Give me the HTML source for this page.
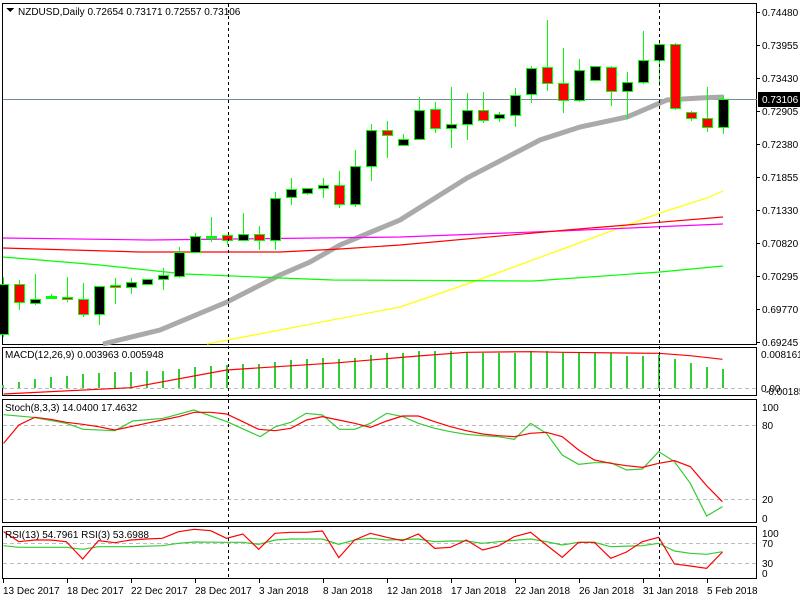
<!DOCTYPE html>
<html><head><meta charset="utf-8"><style>
html,body{margin:0;padding:0;background:#fff;width:800px;height:600px;overflow:hidden}
svg{display:block}
text{font-family:"Liberation Sans",sans-serif;font-size:10px;fill:#000}
</style></head><body>
<svg id="s" width="800" height="600" viewBox="0 0 800 600" shape-rendering="crispEdges">
<rect x="0" y="0" width="800" height="600" fill="#fff"/>
<!-- pane frames -->
<rect x="2.5" y="3.5" width="754" height="341" fill="none" stroke="#000"/>
<rect x="2.5" y="347.5" width="754" height="48" fill="none" stroke="#000"/>
<rect x="2.5" y="399.5" width="754" height="123" fill="none" stroke="#000"/>
<rect x="2.5" y="526.5" width="754" height="52" fill="none" stroke="#000"/>
<!-- dashed level lines -->
<g stroke="#bbb" stroke-dasharray="4,3">
<line x1="3" y1="388.5" x2="756" y2="388.5"/>
<line x1="3" y1="425.5" x2="756" y2="425.5"/>
<line x1="3" y1="499.5" x2="756" y2="499.5"/>
<line x1="3" y1="543.5" x2="756" y2="543.5"/>
<line x1="3" y1="563.5" x2="756" y2="563.5"/>
</g>
<!-- current price line -->
<line x1="3" y1="99.5" x2="757" y2="99.5" stroke="#778899"/>
<g shape-rendering="auto" fill="none">
<polyline stroke="#aaa" stroke-width="5" points="103,344 160,330 227,302 280,275 310,262 340,245 400,220 467,178 540,140 580,127 627,117 667,100 700,98 723,97"/>
<polyline stroke="#ff0" stroke-width="1.2" points="207,344 400,307 470,283 560,250 660,213 707,198 723,191"/>
<polyline stroke="#00ff00" stroke-width="1.2" points="3,257 100,265 185,274 280,278 333,280 533,281 660,272 723,266"/>
<polyline stroke="#f0f" stroke-width="1.2" points="3,238 150,240 400,237 560,231 723,224"/>
<polyline stroke="#f00" stroke-width="1.2" points="3,248 140,252 280,252 340,249 400,245 567,230 723,217"/>
</g>
<g id="candles"></g>
<g id="macd"></g>
<g shape-rendering="auto" fill="none" transform="translate(0,340) scale(0.5102,0.33333)">
<polyline vector-effect="non-scaling-stroke" stroke="#f00" stroke-width="1.2" points="7,162 256,143 444,90 664,68 820,48 914,37 1040,35 1102,37 1291,40 1353,47 1416,58"/>
<polyline vector-effect="non-scaling-stroke" stroke="#3c3" stroke-width="1.2" points="7,224 65,232 130,250 163,268 225,272 260,243 320,235 380,210 445,245 510,290 540,260 570,247 600,220 632,225 665,268 695,268 726,250 758,220 790,230 820,250 852,265 883,275 914,283 946,287 977,290 1008,298 1040,250 1071,280 1102,345 1134,373 1165,368 1197,368 1228,390 1259,387 1291,335 1322,365 1353,430 1385,528 1416,500"/>
<polyline vector-effect="non-scaling-stroke" stroke="#f00" stroke-width="1.2" points="7,310 37,255 68,232 99,238 130,247 162,253 193,260 225,270 256,260 287,250 318,240 350,230 381,217 413,217 444,222 476,245 507,268 539,272 570,265 601,240 632,230 664,240 695,250 726,262 758,243 789,228 820,228 852,245 883,260 914,272 946,282 977,287 1008,290 1040,280 1071,277 1102,290 1134,330 1165,360 1197,370 1228,377 1259,382 1291,370 1322,362 1353,380 1385,437 1416,485"/>
<polyline vector-effect="non-scaling-stroke" stroke="#3c3" stroke-width="1.2" points="7,617 37,622 130,622 162,628 193,620 256,620 318,617 350,610 381,606 444,607 476,607 507,613 539,600 570,597 632,597 664,613 695,600 726,595 758,600 820,597 852,605 883,603 914,603 946,610 977,605 1040,597 1071,605 1102,615 1134,607 1165,607 1197,620 1259,617 1291,610 1322,633 1353,640 1385,643 1416,635"/>
<polyline vector-effect="non-scaling-stroke" stroke="#f00" stroke-width="1.2" points="7,575 37,605 68,600 99,600 130,605 162,657 193,602 225,608 256,600 287,597 318,595 350,575 381,568 413,572 444,595 476,582 507,628 539,580 570,577 601,577 632,573 664,653 695,600 726,580 758,592 789,602 820,582 852,625 883,622 914,600 946,630 977,618 1008,590 1040,577 1071,615 1102,652 1134,607 1165,607 1197,655 1228,636 1259,605 1291,592 1322,672 1353,678 1385,685 1416,636"/>
</g>
<!-- vertical dashed lines -->
<g stroke="#000" stroke-dasharray="3,3">
<line x1="228.5" y1="4" x2="228.5" y2="578"/>
<line x1="659.5" y1="4" x2="659.5" y2="578"/>
</g>
<!-- title -->
<polygon points="6,8 14,8 10,12" fill="#000"/>
<text x="18" y="15">NZDUSD,Daily  0.72654 0.73171 0.72557 0.73106</text>
<text x="5" y="358">MACD(12,26,9) 0.003963 0.005948</text>
<text x="5" y="411">Stoch(8,3,3) 14.0400 17.4632</text>
<text x="5" y="538">RSI(13) 54.7961  RSI(3) 53.6988</text>
<!-- price axis -->
<g stroke="#000">
<line x1="757" y1="12.5" x2="760" y2="12.5"/><line x1="757" y1="45.5" x2="760" y2="45.5"/><line x1="757" y1="78.5" x2="760" y2="78.5"/><line x1="757" y1="111.5" x2="760" y2="111.5"/><line x1="757" y1="144.5" x2="760" y2="144.5"/><line x1="757" y1="177.5" x2="760" y2="177.5"/><line x1="757" y1="210.5" x2="760" y2="210.5"/><line x1="757" y1="243.5" x2="760" y2="243.5"/><line x1="757" y1="276.5" x2="760" y2="276.5"/><line x1="757" y1="309.5" x2="760" y2="309.5"/><line x1="757" y1="342.5" x2="760" y2="342.5"/>
</g>
<g>
<text x="762" y="16">0.74480</text><text x="762" y="49">0.73955</text><text x="762" y="82">0.73430</text><text x="762" y="115">0.72905</text><text x="762" y="148">0.72380</text><text x="762" y="181">0.71855</text><text x="762" y="214">0.71330</text><text x="762" y="247">0.70820</text><text x="762" y="280">0.70295</text><text x="762" y="313">0.69770</text><text x="762" y="346">0.69245</text>
</g>
<rect x="758" y="92" width="42" height="15" fill="#000"/>
<text x="762" y="103" style="fill:#fff">0.73106</text>
<text x="761" y="358">0.008161</text>
<text x="761" y="392">0.00</text>
<text x="765" y="395">-0.001859</text>
<text x="762" y="411">100</text><text x="762" y="429">80</text><text x="762" y="503">20</text><text x="762" y="522">0</text>
<text x="762" y="537">100</text><text x="762" y="547">70</text><text x="762" y="567">30</text><text x="762" y="577">0</text>
<!-- date axis -->
<g id="dates"></g>
<text x="3" y="594">13 Dec 2017</text><text x="67" y="594">18 Dec 2017</text><text x="131" y="594">22 Dec 2017</text><text x="195" y="594">28 Dec 2017</text><text x="259" y="594">3 Jan 2018</text><text x="323" y="594">8 Jan 2018</text><text x="387" y="594">12 Jan 2018</text><text x="451" y="594">17 Jan 2018</text><text x="515" y="594">22 Jan 2018</text><text x="579" y="594">26 Jan 2018</text><text x="643" y="594">31 Jan 2018</text><text x="707" y="594">5 Feb 2018</text>
</svg>
<script>
var NS="http://www.w3.org/2000/svg";
function el(p,t,a){var e=document.createElementNS(NS,t);for(var k in a)e.setAttribute(k,a[k]);p.appendChild(e);return e;}
var C=[[277,337,284,334,'k'],[280,310,284,302,'r'],[274,305,299,303,'k'],[294,299,296,298,'g'],[277,302,297,299,'r'],[283,317,299,314,'r'],[286,325,286,314,'k'],[278,304,285,287,'r'],[278,294,282,287,'k'],[279,284,279,284,'k'],[268,290,275,279,'k'],[247,278,252,276,'k'],[233,252,236,252,'k'],[217,242,236,238,'g'],[235,245,235,240,'r'],[213,240,234,240,'k'],[226,250,234,240,'r'],[192,250,198,240,'k'],[178,205,189,197,'k'],[188,195,188,193,'k'],[178,198,185,188,'k'],[171,208,185,204,'r'],[150,207,166,204,'k'],[124,181,130,166,'k'],[121,158,130,135,'r'],[134,146,139,145,'k'],[97,140,110,139,'k'],[102,133,109,128,'r'],[87,148,124,128,'k'],[93,140,110,124,'k'],[92,123,110,120,'r'],[112,122,114,118,'k'],[88,127,95,115,'k'],[66,103,68,94,'k'],[20,91,67,83,'r'],[48,113,83,100,'r'],[59,102,70,100,'k'],[66,80,66,80,'k'],[66,106,67,91,'r'],[72,119,82,91,'k'],[31,84,60,82,'k'],[40,86,44,60,'k'],[43,110,44,108,'r'],[111,121,112,118,'r'],[87,132,118,127,'r'],[95,134,99,127,'k']];
var g=document.getElementById('candles');
C.forEach(function(c,i){var x=3+16*i;
el(g,'line',{x1:x+.5,x2:x+.5,y1:c[0],y2:c[1],stroke:'#00ff00'});
var h=Math.max(c[3]-c[2],1);
el(g,'rect',{x:x-4.5,y:c[2]+.5,width:10,height:h,fill:c[4]=='k'?'#000':(c[4]=='r'?'#f00':'#00ff00'),stroke:'#00ff00'});
});
var M=[385,382,379,377,376,374,373,372,372,371,371,369,367,366,365,364,364,362,360,359,358,359,358,355,353,353,351,351,351,352,353,353,353,351,351,353,353,353,353,356,356,355,359,363,367,369];
var m=document.getElementById('macd');
M.forEach(function(y,i){var x=3+16*i;el(m,'rect',{x:x-1,y:y,width:2,height:388-y,fill:'#32cd32'});});
var d=document.getElementById('dates');
for(var i=0;i<12;i++){var x=3+64*i+.5;el(d,'line',{x1:x,x2:x,y1:579,y2:583,stroke:'#000'});}
</script>
</body></html>
